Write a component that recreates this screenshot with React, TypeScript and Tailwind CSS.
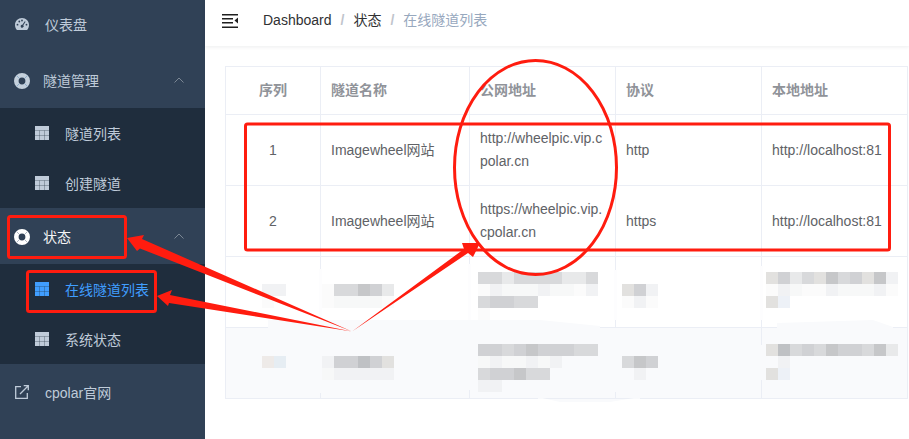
import React from "react";

const FONT = "font-['Liberation_Sans','Noto_Sans_CJK_SC',sans-serif]";

const SHADES: Record<string, string> = {
  a: "bg-[#c6c7c9]",
  b: "bg-[#d0d1d4]",
  c: "bg-[#d8d9db]",
  d: "bg-[#e2e1df]",
  e: "bg-[#e8e9ea]",
  f: "bg-[#f1f2f4]",
  g: "bg-[#f7f8f8]",
  h: "bg-[#fbfbfb]",
  i: "bg-[#bfc1c4]",
  t: "bg-[#e6edf3]",
  u: "bg-[#eeeae8]",
  v: "bg-[#edf1f7]",
  ".": "bg-transparent",
};

function Blur({ rows, className }: { rows: string[]; className: string }) {
  return (
    <div className={className}>
      {rows.map((r, i) => (
        <div key={i} className="flex h-[12px]">
          {r.split("").map((c, j) => (
            <div key={j} className={`h-[12px] w-[12px] ${SHADES[c]}`} />
          ))}
        </div>
      ))}
    </div>
  );
}

function GaugeIcon() {
  return (
    <svg width="14" height="12" viewBox="0 0 14 12" className="fill-[#bfcbd9]">
      <path
        fillRule="evenodd"
        d="M7 0C3.100 0 0 3.100 0 7c0 1.800.6 3.500 1.700 4.700l.3.3h10l.3-.3C13.400 10.500 14 8.800 14 7c0-3.900-3.100-7-7-7zM2.500 5.800a.9.9 0 1 1 0 1.800.9.9 0 0 1 0-1.800zM4.300 2.600a.9.9 0 1 1 0 1.800.9.9 0 0 1 0-1.800zM7 1.600a.9.9 0 1 1 0 1.800.9.9 0 0 1 0-1.800zM11.500 5.800a.9.9 0 1 1 0 1.800.9.9 0 0 1 0-1.800zM9.800 3.200l.8.6-2.300 3.400a1.500 1.500 0 1 1-.9-.5z"
      />
    </svg>
  );
}

function RingIcon({ active }: { active?: boolean }) {
  return (
    <svg width="16" height="16" viewBox="0 0 16 16" className="mt-[2px]">
      <circle cx="8" cy="8" r="5.700" fill="none" strokeWidth="4.600" className={active ? "stroke-white" : "stroke-[#c4d0dc]"} />
      <path
        d="M2.500 13.500 5.500 10.500M13.500 2.500 10.500 5.500M2.500 2.500 5.500 5.500M13.500 13.500 10.500 10.500"
        strokeWidth="0.8"
        className={active ? "stroke-[#9aa5b2]" : "stroke-[#7fa2c4]"}
      />
    </svg>
  );
}

function TableIcon({ active }: { active?: boolean }) {
  const fill = active ? "fill-[#409eff]" : "fill-[#bfcbd9]";
  return (
    <svg width="14" height="14" viewBox="0 0 14 14">
      <rect width="14" height="14" className={fill} />
      <path d="M0 9.500h14M4.500 4.500v9.500M9.500 4.500v9.500M0 4.500h14" strokeWidth="1" className="stroke-[#1f2d3d]" strokeOpacity="0.3" />
    </svg>
  );
}

function Chevron() {
  return (
    <svg width="10" height="6" viewBox="0 0 10 6" fill="none" className="stroke-[#7b8794]">
      <path d="M.5 5.500 5 1l4.500 4.500" strokeWidth="1" />
    </svg>
  );
}

function LinkIcon() {
  return (
    <svg width="14" height="14" viewBox="0 0 14 14" fill="none" className="stroke-[#bfcbd9]" strokeWidth="1.300">
      <path d="M6 1.700H.7v11.600h11.600V8" />
      <path d="M5 9 13 1M8.700.7h4.600v4.600" />
    </svg>
  );
}

function Hamburger() {
  return (
    <svg width="16" height="14" viewBox="0 0 16 14" className="fill-[#1f1f1f]">
      <rect x="0" y="0" width="16" height="1.500" />
      <rect x="0" y="4" width="11" height="1.500" />
      <rect x="0" y="8" width="11" height="1.500" />
      <rect x="0" y="12.500" width="16" height="1.500" />
      <path d="M16 3.500v6L12.500 6.500z" />
    </svg>
  );
}

function TopItem({ icon, label, pad, arrow, tone }: { icon: React.ReactNode; label: string; pad: string; arrow?: boolean; tone: string }) {
  return (
    <div className={`flex h-[56px] items-center pr-[21px] text-[14px] ${tone}`}>
      <span className="flex w-[44px] justify-center">{icon}</span>
      <span className={`mt-[2px] ${pad}`}>{label}</span>
      {arrow && (
        <span className="ml-auto flex">
          <Chevron />
        </span>
      )}
    </div>
  );
}

function SubItem({ label, active }: { label: string; active?: boolean }) {
  return (
    <div className={`flex h-[50px] items-center pl-[35px] text-[14px] ${active ? "text-[#409eff]" : "text-[#bfcbd9]"}`}>
      <TableIcon active={active} />
      <span className="ml-[16px] mt-[2px]">{label}</span>
    </div>
  );
}

const TH = "h-[48px] border-r border-b border-[#ebeef5] px-[10px] align-middle text-[14px] font-bold text-[#909399]";
const TD = "h-[71px] border-r border-b border-[#ebeef5] px-[10px] align-middle text-[14px] leading-[23px] text-[#606266]";
const BL = "h-[71px] border-r border-b border-[#ebeef5] p-0 align-top";

export default function App() {
  return (
    <div className={`relative flex h-[439px] w-[909px] overflow-hidden bg-white ${FONT}`}>
      <aside className="h-full w-[205px] shrink-0 overflow-hidden bg-[#304156]">
        <div className="-mt-[4px]">
          <TopItem icon={<GaugeIcon />} label="仪表盘" pad="ml-[1px]" tone="text-[#bfcbd9]" />
          <TopItem icon={<RingIcon />} label="隧道管理" pad="-ml-[1px]" arrow tone="text-[#bfcbd9]" />
          <div className="bg-[#1f2d3d]">
            <SubItem label="隧道列表" />
            <SubItem label="创建隧道" />
          </div>
          <TopItem icon={<RingIcon active />} label="状态" pad="-ml-[1px]" arrow tone="text-[#f4f4f5]" />
          <div className="bg-[#1f2d3d]">
            <SubItem label="在线隧道列表" active />
            <SubItem label="系统状态" />
          </div>
          <TopItem icon={<LinkIcon />} label="cpolar官网" pad="ml-[1px]" tone="text-[#bfcbd9]" />
        </div>
      </aside>

      <main className="min-w-0 flex-1">
        <header className="flex h-[46px] items-center pb-[5px] pl-[17px] text-[14px] shadow-[0_1px_4px_rgba(0,21,41,0.08)]">
          <Hamburger />
          <span className="ml-[25px] text-[#303133]">Dashboard</span>
          <span className="mx-[9px] font-bold text-[#c0c4cc]">/</span>
          <span className="text-[#303133]">状态</span>
          <span className="mx-[9px] font-bold text-[#c0c4cc]">/</span>
          <span className="text-[#97a8be]">在线隧道列表</span>
        </header>

        <div className="pl-[20px] pt-[20px]">
          <table className="w-[683px] table-fixed border-separate border-spacing-0 border-t border-l border-[#ebeef5]">
            <colgroup>
              <col className="w-[95px]" />
              <col className="w-[149px]" />
              <col className="w-[146px]" />
              <col className="w-[146px]" />
              <col className="w-[146px]" />
            </colgroup>
            <thead>
              <tr>
                <th className={`${TH} text-center`}>序列</th>
                <th className={`${TH} text-left`}>隧道名称</th>
                <th className={`${TH} text-left`}>公网地址</th>
                <th className={`${TH} text-left`}>协议</th>
                <th className={`${TH} text-left`}>本地地址</th>
              </tr>
            </thead>
            <tbody>
              <tr>
                <td className={`${TD} pt-[1px] text-center`}>1</td>
                <td className={`${TD} pt-[1px]`}>Imagewheel网站</td>
                <td className={`${TD} break-all`}>http://wheelpic.vip.cpolar.cn</td>
                <td className={`${TD} pt-[1px]`}>http</td>
                <td className={`${TD} whitespace-nowrap pt-[1px]`}>http://localhost:81</td>
              </tr>
              <tr>
                <td className={`${TD} pt-[1px] text-center`}>2</td>
                <td className={`${TD} pt-[1px]`}>Imagewheel网站</td>
                <td className={`${TD} break-all`}>https://wheelpic.vip.cpolar.cn</td>
                <td className={`${TD} pt-[1px]`}>https</td>
                <td className={`${TD} whitespace-nowrap pt-[1px]`}>http://localhost:81</td>
              </tr>
              <tr>
                <td className={BL}>
                  <Blur className="ml-[36px] mt-[15px]" rows={["..", "ff", "h."]} />
                </td>
                <td className={BL}>
                  <Blur className="ml-[1px] mt-[15px]" rows={["......", "hccabe", "hggggh"]} />
                </td>
                <td className={BL}>
                  <Blur className="ml-[8px] mt-[15px]" rows={["ccecccceec", "hfgggfgghf", "cbbcc", "h"]} />
                </td>
                <td className={BL}>
                  <Blur className="ml-[6px] mt-[15px]" rows={["...", "dbf", "hfh"]} />
                </td>
                <td className={BL}>
                  <Blur className="ml-[4px] mt-[15px]" rows={["dbecdacbdaf", "hfghhfgggfh", "dv"]} />
                </td>
              </tr>
              <tr className="bg-[#f9fafc]">
                <td className={BL}>
                  <Blur className="ml-[36px] mt-[16px]" rows={["..", "ut"]} />
                </td>
                <td className={BL}>
                  <Blur className="ml-[1px] mt-[16px]" rows={["......", "fbbibd", "gfffff"]} />
                </td>
                <td className={BL}>
                  <Blur className="ml-[8px] mt-[16px]" rows={["bbcbabbbcc", "gfggfgf", "cbbacc", "ff"]} />
                </td>
                <td className={BL}>
                  <Blur className="ml-[6px] mt-[16px]" rows={["...", "cab", ".f."]} />
                </td>
                <td className={BL}>
                  <Blur className="ml-[4px] mt-[16px]" rows={["dicbcabbcae", ".f", "dv"]} />
                </td>
              </tr>
            </tbody>
          </table>
        </div>
      </main>

      <svg width="909" height="439" viewBox="0 0 909 439" className="pointer-events-none absolute left-0 top-0" fill="none">
        <g className="fill-[#fdfdfe]">
          <rect x="319" y="269" width="3" height="51" />
          <rect x="468" y="264" width="3" height="56" />
          <rect x="614" y="270" width="3" height="50" />
          <rect x="760" y="266" width="3" height="54" />
        </g>
        <g className="fill-[#f9fafc]">
          <polygon points="268,320 540,320 600,326 600,328 268,328" />
          <polygon points="777,328 777,323 873,320 893,327 893,328" />
          <polygon points="538,397 560,402 610,402 640,397 640,399 538,399" />
          <rect x="319" y="328" width="3" height="65" />
          <rect x="468" y="328" width="3" height="62" />
          <rect x="614" y="328" width="3" height="64" />
          <rect x="760" y="345" width="3" height="35" />
        </g>
        <g className="stroke-[#ff1c0f]" strokeWidth="3">
          <rect x="245.500" y="124" width="644" height="126" rx="2" />
          <rect x="8.500" y="216.500" width="117" height="41" rx="2" />
          <rect x="27.500" y="271.500" width="128" height="40" rx="2" />
          <ellipse cx="535.500" cy="167.500" rx="81" ry="107" />
        </g>
        <g className="fill-[#ff1c0f]">
          <polygon points="352,331.500 142,239 144,235 127,238 137,251 140,248.500" />
          <polygon points="352,331.500 170,295 172,290 157,296 168,306 169,303" />
          <polygon points="352,331.500 464,249 462,243 480,243 473,257 468,253" />
        </g>
      </svg>
    </div>
  );
}
